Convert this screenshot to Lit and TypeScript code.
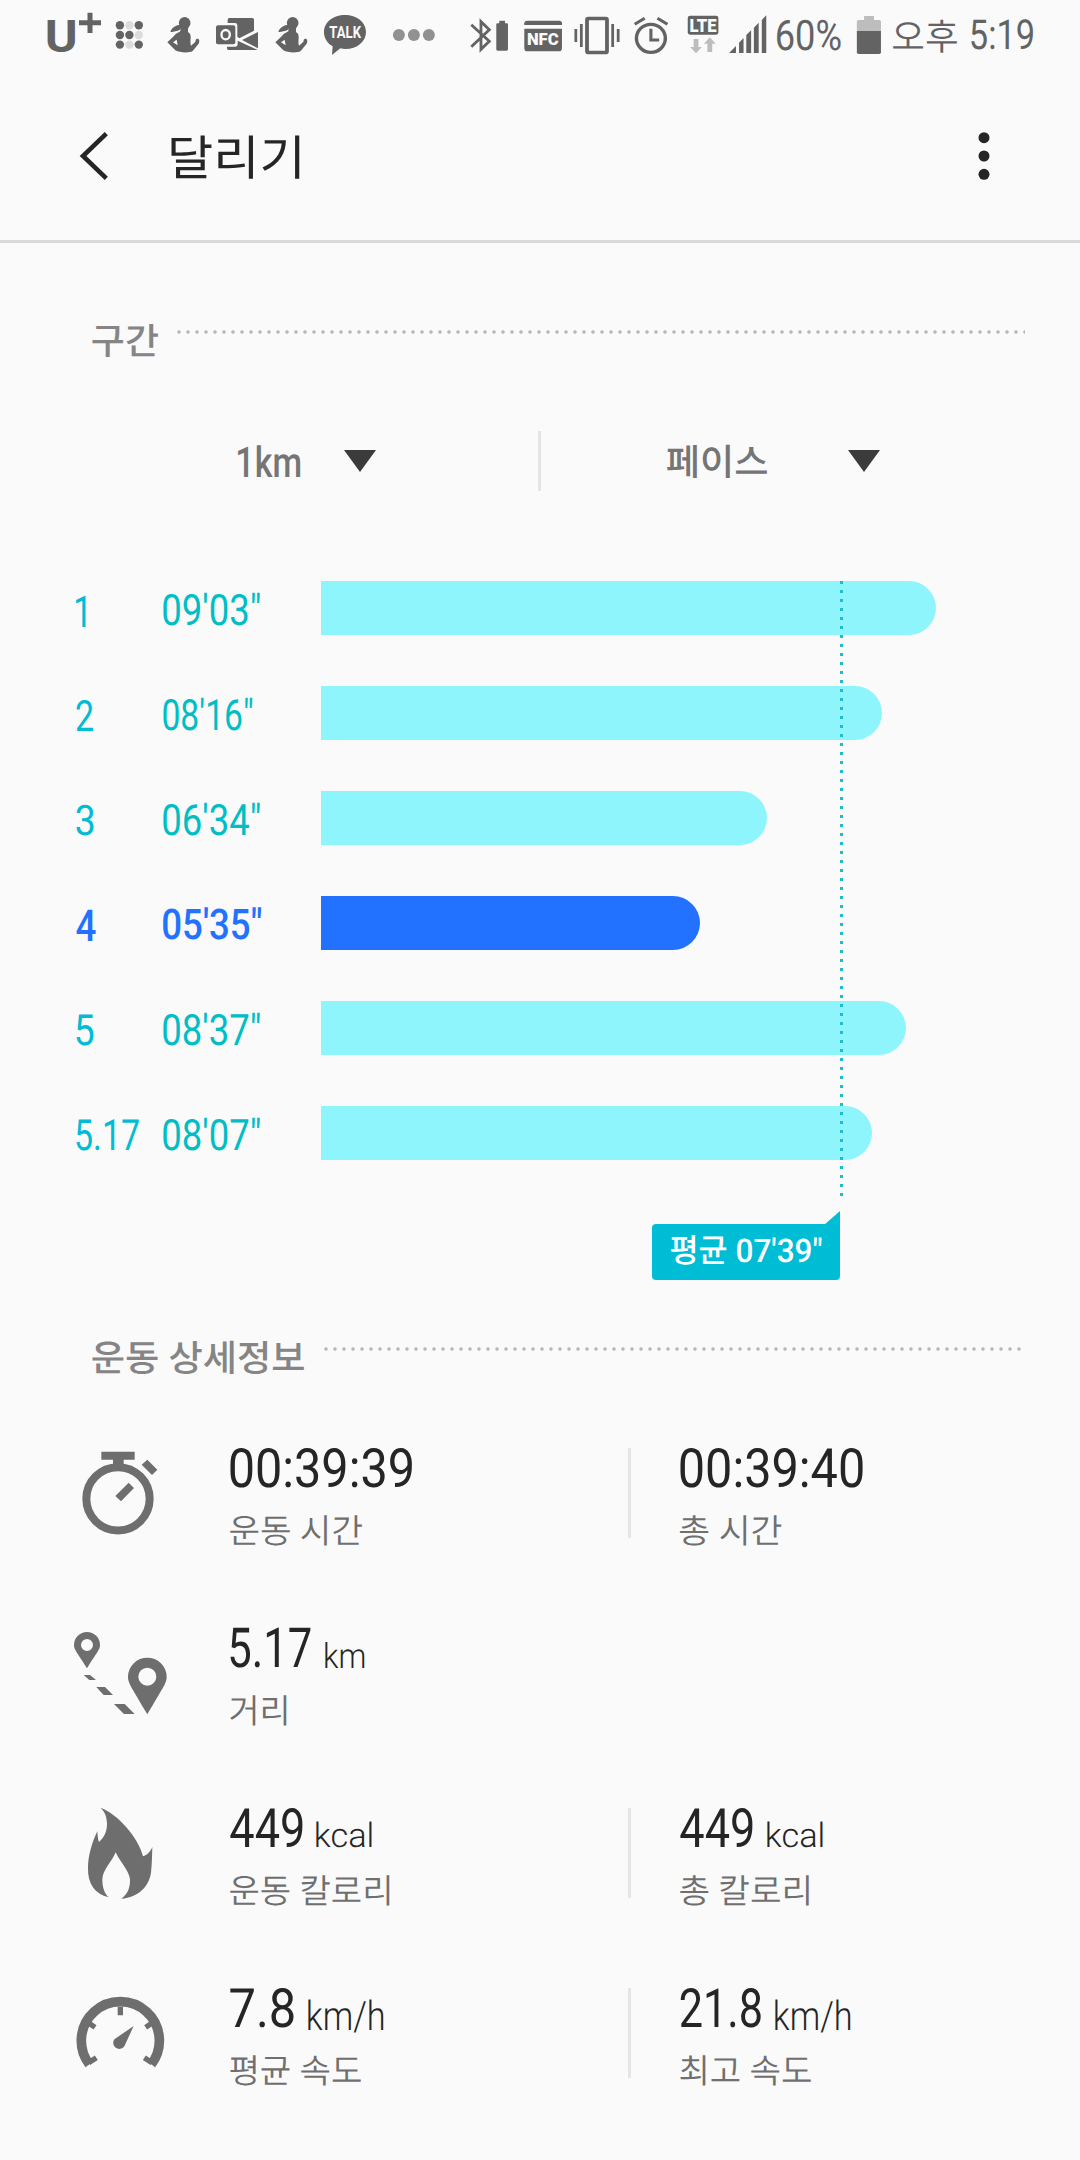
import { LitElement, html, svg, css, nothing, type TemplateResult, type SVGTemplateResult } from "lit";
import { customElement, property } from "lit/decorators.js";
import { classMap } from "lit/directives/class-map.js";
import { styleMap } from "lit/directives/style-map.js";

/** One line of text whose inked area fills a box of exactly w × h pixels. */
@customElement("ink-text")
export class InkText extends LitElement {
  @property() text = "";
  @property({ type: Number }) w = 0;
  @property({ type: Number }) h = 0;

  static styles = css`
    :host {
      display: block;
      flex: none;
    }
    .line {
      display: block;
      width: max-content;
      white-space: pre;
      transform-origin: 0 0;
      text-rendering: geometricPrecision;
    }
  `;

  render() {
    const cs = getComputedStyle(this);
    const ctx = document.createElement("canvas").getContext("2d")!;
    ctx.font = `${cs.fontWeight} 800px ${cs.fontFamily}`;
    const probe = ctx.measureText(this.text);
    const size = (800 * this.h) / (probe.actualBoundingBoxAscent + probe.actualBoundingBoxDescent);
    const k = size / 800;
    const left = probe.actualBoundingBoxLeft * k;
    const inkWidth = left + probe.actualBoundingBoxRight * k;
    const sx = this.w / inkWidth;
    // Line boxes are laid out with whole-pixel ascent and descent.
    const ascent = Math.round(probe.fontBoundingBoxAscent * k);
    const descent = Math.round(probe.fontBoundingBoxDescent * k);
    const lineHeight = ascent + descent;
    const dy = probe.actualBoundingBoxAscent * k - ascent;
    this.style.width = `${this.w}px`;
    this.style.height = `${this.h}px`;
    return html`<span
      class="line"
      style=${styleMap({
        fontSize: `${size}px`,
        lineHeight: `${lineHeight}px`,
        transform: `translate(${left * sx}px, ${dy}px) scaleX(${sx})`,
      })}
      >${this.text}</span
    >`;
  }
}

const ink = (text: string, w: number, h: number, cls = "") =>
  html`<ink-text class=${cls} .text=${text} .w=${w} .h=${h}></ink-text>`;

/* ---------- status bar glyphs ---------- */

const tile = (x0: number, x1: number, body: SVGTemplateResult) => html`<svg
  width=${x1 - x0}
  height="60"
  viewBox="${x0} 0 ${x1 - x0} 60"
>
  ${body}
</svg>`;

const person = svg`
  <ellipse cx="74" cy="45" rx="17.500" ry="18"/>
  <path d="M62 50C48 51 36 58 31 71C38 73 44 70 50 69C58 68 62 64 66 58Z"/>
  <path fill-rule="evenodd" d="M62 56L61 70C52 75 46 78 42 84L22 103L46 127C58 134 88 136 98 129L116 107C119 100 119 92 112 92C106 92 108 99 105 103L93 113C90 106 92 98 92 88C92 80 90 75 84 72L84 58ZM39 103L50 95L53 112Z"/>`;

const leftTiles = () => [
  tile(40, 108, svg`
    <text class="logo" x="44.8" y="51.6" font-size="43.5" textLength="33" lengthAdjust="spacingAndGlyphs">U</text>
    <path d="M79 22.8H101M90 12.7V33" stroke-width="5"/>`),
  tile(108, 158, svg`
    ${[25.3, 35, 44.6].map((y, r) =>
      [119.9, 129.4, 138.8].map(
        (x, c) => svg`<circle class=${(r + c) % 2 && !(r === 1 && c === 0) ? "pale" : ""} cx=${x} cy=${y} r="4.2"/>`,
      ),
    )}`),
  tile(158, 208, svg`<g transform="translate(160 8) scale(.3333)">${person}</g>`),
  tile(208, 266, svg`<g transform="translate(160 8) scale(.3333)">
    <path d="M208 30H277Q282 30 282 35V68L238 91L232 86V52Q232 45 225 45H203V35Q203 30 208 30Z"/>
    <path d="M294 72V121L246 96Z"/>
    <path d="M201 116H225Q233 116 233 108V98L293 126H206Q201 126 201 121Z"/>
    <rect x="168" y="52" width="58" height="57" rx="6"/>
    <ellipse class="knock" cx="197" cy="80" rx="12.5" ry="14" stroke-width="7"/>
  </g>`),
  tile(266, 316, svg`<g transform="translate(268 8) scale(.3333)">${person}</g>`),
  tile(316, 374, svg`<g transform="translate(160 8) scale(.3333)">
    <path d="M555 21C590 21 618 43 618 72C618 101 592 123 556 123C551 123 546 122 541 121L516 141L518 115C502 106 492 90 492 72C492 43 520 21 555 21Z"/>
    <text class="cut" x="508" y="91" font-size="49" font-weight="700" textLength="95" lengthAdjust="spacingAndGlyphs">TALK</text>
  </g>`),
  tile(374, 450, svg`<g class="mid"><circle cx="398.9" cy="35" r="6"/><circle cx="413.9" cy="35" r="6"/><circle cx="428.9" cy="35" r="6"/></g>`),
];

const rightTiles = () => [
  tile(450, 516, svg`<g transform="translate(160 8) scale(.3333)">
    <path class="line" stroke-width="8.5" d="M934 50L988 100L963 124V41L988 65L934 116"/>
    <path d="M1018 38H1035V46H1041Q1044 46 1044 49V124Q1044 128 1040 128H1013Q1009 128 1009 124V49Q1009 46 1012 46H1018Z"/>
  </g>`),
  tile(516, 570, svg`<g transform="translate(160 8) scale(.3333)">
    <path d="M1093 51V46Q1093 38 1102 38H1198Q1206 38 1206 46V51Z"/>
    <path d="M1093 62H1206V120Q1206 130 1197 130H1102Q1093 130 1093 120Z"/>
    <text class="cut" x="1101" y="112" font-size="50" font-weight="900" textLength="95" lengthAdjust="spacingAndGlyphs">NFC</text>
  </g>`),
  tile(570, 626, svg`<g transform="translate(540 0) scale(.3444 .3333)">
    <rect class="line" x="136.500" y="55.500" width="58" height="102" rx="4" stroke-width="11"/>
    <path d="M104 87V126M120 72V141M211 72V141M227 87V126" stroke-width="8"/>
  </g>`),
  tile(626, 678, svg`<g transform="translate(540 0) scale(.3444 .3333)">
    <circle class="line" cx="322" cy="115" r="42" stroke-width="10"/>
    <path class="line" stroke-width="9" d="M322 86V120H346M275 73L304 55M341 55L370 73"/>
  </g>`),
  tile(678, 724, svg`<g transform="translate(540 0) scale(.3444 .3333)">
    <rect x="429" y="47" width="89" height="57" rx="7"/>
    <text class="cut" x="434" y="95" font-size="54" font-weight="900" textLength="79" lengthAdjust="spacingAndGlyphs">LTE</text>
    <path class="soft" d="M446 117H460V141H470L453 160L436 141H446ZM486 156H500V131H510L493 112L476 131H486Z"/>
  </g>`),
  tile(724, 777, svg`<g transform="translate(540 0) scale(.3444 .3333)">
    <path d="M549 159L569 138V159ZM578 128L591 114V159H578ZM599 105L613 91V159H599ZM621 83L635 68V159H621ZM644 60L657 46V159H644Z"/>
  </g>`),
];

const battery = () =>
  tile(841, 893, svg`<g transform="translate(540 0) scale(.3444 .3333)">
    <path class="soft" d="M941 48H970V60H985Q990 60 990 65V94H920V65Q920 60 925 60H941Z"/>
    <path d="M920 93H990V157Q990 162 985 162H925Q920 162 920 157Z"/>
  </g>`);

/* ---------- metric icons ---------- */

const metricIcons: Record<string, TemplateResult> = {
  time: html`<svg viewBox="30 444 300 270">
    <circle cx="174" cy="596.500" r="95" fill="none" stroke="currentColor" stroke-width="24"/>
    <path d="M124 455H224V479H191V500H159V479H124ZM262 479L292 509L276 525L245 494ZM206 548L222 564L183 604L166 588Z"/></svg>`,
  route: html`<svg viewBox="30 984 300 270">
    <path fill-rule="evenodd" d="M81 996A39 39 0 0 1 120 1035C120 1050 111 1056 81 1105C51 1056 42 1050 42 1035A39 39 0 0 1 81 996ZM81 1017A18 18 0 1 0 81 1053A18 18 0 1 0 81 1017Z"/>
    <path fill-rule="evenodd" d="M262 1073A58 58 0 0 1 320 1130C320 1150 310 1160 262 1243C214 1160 204 1150 204 1130A58 58 0 0 1 262 1073ZM262 1103A27 27 0 1 0 262 1157A27 27 0 1 0 262 1103Z"/>
    <path d="M71 1125H90L108 1140H88ZM109 1161H135L159 1185H131ZM162 1212H194L224 1242H192Z"/></svg>`,
  flame: html`<svg viewBox="30 144 300 270">
    <path d="M121 143C172 161 236 232 249 289C261 286 271 275 277 261C276 290 276 312 273 338C267 378 236 412 184 416C202 404 211 384 210 358C207 331 181 307 167 277C154 307 128 330 127 358C127 382 133 401 146 412C104 403 83 370 84 325C84 288 95 250 112 214C113 226 113 236 117 246C131 234 142 215 141 190C140 170 135 155 121 143Z"/></svg>`,
  gauge: html`<svg viewBox="30 684 300 270">
    <path fill="none" stroke="currentColor" stroke-width="29" d="M88 913A117 117 0 1 1 274 913"/>
    <path fill="none" stroke="currentColor" stroke-width="16" d="M181 740V766M86 789L105 802M276 789L257 802M86 908L109 893M276 908L253 893"/>
    <path d="M221 798L193 859A18 18 0 1 1 163 838Z"/></svg>`,
};

/* ---------- data ---------- */

interface Split { km: string; kmW: number; pace: string; paceW: number; bar: number; best?: boolean }
const splits: Split[] = [
  { km: "1", kmW: 9.5, pace: "09'03\"", paceW: 97, bar: 615 },
  { km: "2", kmW: 17, pace: "08'16\"", paceW: 89.5, bar: 561 },
  { km: "3", kmW: 17.5, pace: "06'34\"", paceW: 97, bar: 446 },
  { km: "4", kmW: 19.5, pace: "05'35\"", paceW: 98, bar: 379, best: true },
  { km: "5", kmW: 17.5, pace: "08'37\"", paceW: 97, bar: 585 },
  { km: "5.17", kmW: 63, pace: "08'07\"", paceW: 97, bar: 551 },
];

interface Metric { value: string; vw: number; unit?: string; uw?: number; label: string; lw: number }
interface MetricRow { icon: string; items: Metric[] }
const metrics: MetricRow[] = [
  { icon: "time", items: [
    { value: "00:39:39", vw: 182, label: "운동 시간", lw: 132 },
    { value: "00:39:40", vw: 183, label: "총 시간", lw: 101.5 },
  ] },
  { icon: "route", items: [{ value: "5.17", vw: 81, unit: "km", uw: 39.5, label: "거리", lw: 56.5 }] },
  { icon: "flame", items: [
    { value: "449", vw: 72.5, unit: "kcal", uw: 56, label: "운동 칼로리", lw: 159.5 },
    { value: "449", vw: 72.5, unit: "kcal", uw: 56, label: "총 칼로리", lw: 129 },
  ] },
  { icon: "gauge", items: [
    { value: "7.8", vw: 64, unit: "km/h", uw: 75.5, label: "평균 속도", lw: 131 },
    { value: "21.8", vw: 81, unit: "km/h", uw: 75.5, label: "최고 속도", lw: 131 },
  ] },
];

@customElement("app-root")
export class AppRoot extends LitElement {
  static styles = css`
    :host {
      display: block;
      width: 1080px;
      min-height: 2160px;
      background: #fafafa;
      color: #252525;
      font-family: Roboto, "Noto Sans CJK KR", sans-serif;
      overflow: hidden;
    }
    svg {
      display: block;
      flex: none;
      overflow: visible;
      fill: currentColor;
    }

    .status {
      display: flex;
      align-items: flex-start;
      height: 60px;
      padding-left: 40px;
      box-sizing: border-box;
      color: #636363;
      font-weight: 350;
    }
    .status path[stroke-width] { stroke: currentColor; }
    .status .line { fill: none; stroke: currentColor; }
    .status .pale { fill: #dcdcdc; }
    .status .mid { fill: #919191; }
    .status .soft { fill: #bdbdbd; }
    .status .cut { fill: #fafafa; }
    .status .knock { fill: none; stroke: #fafafa; }
    .status .logo { font-weight: 700; }
    .status-text { margin-top: 20px; font-weight: 400; }
    .meridiem { margin-top: 18.5px; }
    .clock { margin: 20px 0 0 14px; font-weight: 400; }

    .appbar {
      display: flex;
      align-items: center;
      height: 183px;
      padding: 12px 90px 0 80px;
      box-sizing: border-box;
      border-bottom: 3px solid #d9d9d9;
    }
    .title { margin: 2px auto 0 63px; font-weight: 400; }

    .section {
      display: flex;
      align-items: flex-start;
      padding-left: 92px;
      color: #858585;
      font-weight: 500;
    }
    .intervals { margin-top: 80px; }
    .details { margin-top: 60px; }
    .dots {
      height: 4px;
      margin: 7px 0 0 19px;
      width: 848px;
      background: radial-gradient(circle at 2px 2px, #b9b9b9 1.3px, transparent 2.2px) 0 0 / 9px 4px;
    }
    .details .dots { width: 697px; margin-left: 20px; }

    .filters {
      display: grid;
      grid-template-columns: 538px 3px 1fr;
      height: 60px;
      margin-top: 74px;
      color: #757575;
      font-weight: 500;
    }
    .filter { display: flex; align-items: center; gap: 44px; padding-left: 238px; }
    .filter.metric { gap: 81px; padding-left: 126px; }
    .filter svg { color: #3b3b3b; }
    .rule { background: #e5e5e5; }

    .chart {
      position: relative;
      display: flex;
      flex-direction: column;
      gap: 51px;
      margin-top: 90px;
      padding-left: 75.5px;
    }
    .split {
      display: grid;
      grid-template-columns: 87.5px 158px 1fr;
      height: 54px;
      color: #00bdc6;
      font-weight: 400;
    }
    .split .km { margin-top: 14px; color: #00bcd4; }
    .split .pace { margin-top: 12px; }
    .bar { background: #8ff5fc; border-radius: 0 27px 27px 0; }
    .split.best, .split.best .km { color: #2272ff; font-weight: 500; }
    .split.best .km { margin-top: 13px; }
    .best .bar { background: #2272ff; }
    .average-line {
      position: absolute;
      left: 840px;
      top: 0;
      width: 3px;
      height: 615px;
      background: repeating-linear-gradient(#1fbdcb 0 3px, transparent 3px 9px);
    }
    .average {
      position: relative;
      display: flex;
      width: 188px;
      height: 56px;
      margin: 64px 0 0 652px;
      padding: 11px 0 0 19px;
      box-sizing: border-box;
      border-radius: 4px 0 4px 4px;
      background: #00bdd6;
      color: #fff;
      font-weight: 500;
    }
    .average::before {
      content: "";
      position: absolute;
      right: 0;
      top: -13px;
      width: 16px;
      height: 14px;
      background: inherit;
      clip-path: polygon(100% 0, 100% 100%, 0 100%);
    }

    .metrics { display: flex; flex-direction: column; gap: 90px; margin-top: 74px; padding-left: 70px; }
    .metric-row {
      display: grid;
      grid-template-columns: 159.5px 398.5px 3px 1fr;
      grid-template-rows: 90px;
      height: 90px;
    }
    .icon { width: 100px; height: 90px; color: #6e6e6e; }
    .item.second { padding-left: 49px; }
    .value { display: flex; align-items: flex-end; height: 40.5px; gap: 14px; font-weight: 400; }
    .unit { font-weight: 350; }
    .unit.deep { margin-bottom: -4.5px; }
    .label { margin-top: 27px; color: #6f6f6f; font-weight: 350; }
  `;

  private item(m: Metric, second = false): TemplateResult {
    const deep = m.unit === "km/h";
    return html`<div class=${classMap({ item: true, second })}>
      <div class="value">
        ${ink(m.value, m.vw, 40.5)}
        ${m.unit ? ink(m.unit, m.uw!, deep ? 33 : 26, deep ? "unit deep" : "unit") : nothing}
      </div>
      ${ink(m.label, m.lw, 30.5, "label")}
    </div>`;
  }

  render() {
    const triangle = html`<svg width="32" height="22" viewBox="0 0 32 22"><path d="M0 0H32L16 22Z" /></svg>`;
    return html`
      <div class="status">
        ${leftTiles()} ${rightTiles()}
        ${ink("60%", 64, 31.5, "status-text")}
        ${battery()}
        ${ink("오후", 64, 33.5, "meridiem")}
        ${ink("5:19", 62, 31, "clock")}
      </div>

      <header class="appbar">
        <svg width="28" height="48" viewBox="0 0 28 48">
          <path d="M26.3 1.7L3 24L26.3 46.3" fill="none" stroke="currentColor" stroke-width="4.6" />
        </svg>
        ${ink("달리기", 128.5, 44, "title")}
        <svg width="11" height="48" viewBox="0 0 11 48">
          <circle cx="5" cy="5.7" r="5.5" /><circle cx="5" cy="24" r="5.5" /><circle cx="5" cy="42.3" r="5.5" />
        </svg>
      </header>

      <div class="section intervals">${ink("구간", 66, 34)}<div class="dots"></div></div>

      <div class="filters">
        <div class="filter">${ink("1km", 62, 32.5)} ${triangle}</div>
        <div class="rule"></div>
        <div class="filter metric">${ink("페이스", 100, 34)} ${triangle}</div>
      </div>

      <div class="chart">
        ${splits.map(
          (s) => html`<div class=${classMap({ split: true, best: !!s.best })}>
            ${ink(s.km, s.kmW, 31.5, "km")} ${ink(s.pace, s.paceW, 33, "pace")}
            <div class="bar" style=${styleMap({ width: `${s.bar}px` })}></div>
          </div>`,
        )}
        <div class="average-line"></div>
      </div>
      <div class="average">${ink("평균 07'39\"", 150.5, 30.5)}</div>

      <div class="section details">${ink("운동 상세정보", 212, 34)}<div class="dots"></div></div>

      <div class="metrics">
        ${metrics.map(
          (r) => html`<div class="metric-row">
            <div class="icon">${metricIcons[r.icon]}</div>
            ${this.item(r.items[0])}
            ${r.items[1] ? html`<div class="rule"></div>${this.item(r.items[1], true)}` : nothing}
          </div>`,
        )}
      </div>
    `;
  }
}
